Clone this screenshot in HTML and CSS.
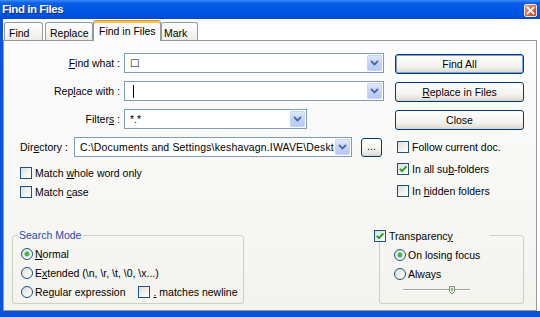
FILE: index.html
```html
<!DOCTYPE html>
<html lang="en">
<head>
<meta charset="utf-8">
<title>Find in Files</title>
<link rel="stylesheet" href="styles.css">
</head>
<body>
<div class="window">
  <div class="titlebar">
    <span class="title">Find in Files</span>
    <span class="close" aria-label="Close">
      <svg width="11" height="11" viewBox="0 0 11 11"><path d="M2.5 2.5 L8.5 8.5 M8.5 2.5 L2.5 8.5" stroke="#fff" stroke-width="1.8" stroke-linecap="square"/></svg>
    </span>
  </div>
  <div class="frame">
    <div class="tabs">
      <div class="tab t-find">Find</div>
      <div class="tab t-replace">Replace</div>
      <div class="tab active t-fif">Find in Files</div>
      <div class="tab t-mark">Mark</div>
    </div>
    <div class="panel">
      <div class="top">
        <div class="fields">
          <div class="row">
            <label class="lbl"><u>F</u>ind what :</label>
            <div class="combo w-wide">
              <span class="value"><span class="unknown">□</span></span>
              <span class="arrow"><svg width="9" height="6" viewBox="0 0 9 6"><path d="M1 1 L4.5 4.5 L8 1" fill="none" stroke="#4D6A9A" stroke-width="1.8"/></svg></span>
            </div>
          </div>
          <div class="row">
            <label class="lbl">Rep<u>l</u>ace with :</label>
            <div class="combo w-wide">
              <span class="value"><span class="caret"></span></span>
              <span class="arrow"><svg width="9" height="6" viewBox="0 0 9 6"><path d="M1 1 L4.5 4.5 L8 1" fill="none" stroke="#4D6A9A" stroke-width="1.8"/></svg></span>
            </div>
          </div>
          <div class="row">
            <label class="lbl">Filter<u>s</u> :</label>
            <div class="combo w-filter">
              <span class="value">*.*</span>
              <span class="arrow"><svg width="9" height="6" viewBox="0 0 9 6"><path d="M1 1 L4.5 4.5 L8 1" fill="none" stroke="#4D6A9A" stroke-width="1.8"/></svg></span>
            </div>
          </div>
          <div class="row dir-row">
            <label class="dir-lbl">Dir<u>e</u>ctory :</label>
            <div class="combo w-dir">
              <span class="value dir-value">C:\Documents and Settings\keshavagn.IWAVE\Desktop</span>
              <span class="arrow"><svg width="9" height="6" viewBox="0 0 9 6"><path d="M1 1 L4.5 4.5 L8 1" fill="none" stroke="#4D6A9A" stroke-width="1.8"/></svg></span>
            </div>
            <button class="btn dots">...</button>
          </div>
          <div class="check-row left"><span class="cb"></span><span class="txt">Match <u>w</u>hole word only</span></div>
          <div class="check-row left"><span class="cb"></span><span class="txt">Match <u>c</u>ase</span></div>
        </div>
        <div class="actions">
          <button class="btn default"><span class="txt">Find All</span></button>
          <button class="btn"><span class="txt"><u>R</u>eplace in Files</span></button>
          <button class="btn last"><span class="txt">Close</span></button>
          <div class="check-row right"><span class="cb"></span><span class="txt">Follow current doc.</span></div>
          <div class="check-row right"><span class="cb checked"><svg width="10" height="10" viewBox="0 0 10 10"><path d="M1.8 4.8 L4 7.2 L8.4 2.4" fill="none" stroke="#21A121" stroke-width="1.9"/></svg></span><span class="txt">In all su<u>b</u>-folders</span></div>
          <div class="check-row right"><span class="cb"></span><span class="txt">In <u>h</u>idden folders</span></div>
        </div>
      </div>
      <div class="bottom">
        <fieldset class="group search">
          <legend>Search Mode</legend>
          <div class="gbody">
            <div class="opt"><span class="radio on"></span><span class="txt"><u>N</u>ormal</span></div>
            <div class="opt"><span class="radio"></span><span class="txt">E<u>x</u>tended (\n, \r, \t, \0, \x...)</span></div>
            <div class="opt"><span class="radio"></span><span class="txt">Re<u>g</u>ular expression</span><span class="cb gap"></span><span class="txt"><u>.</u> matches newline</span></div>
          </div>
        </fieldset>
        <fieldset class="group transp">
          <legend><span class="cb checked"><svg width="10" height="10" viewBox="0 0 10 10"><path d="M1.8 4.8 L4 7.2 L8.4 2.4" fill="none" stroke="#21A121" stroke-width="1.9"/></svg></span><span class="txt">Transparenc<u>y</u></span></legend>
          <div class="gbody tbody">
            <div class="opt"><span class="radio on"></span><span class="txt">On losing focus</span></div>
            <div class="opt"><span class="radio"></span><span class="txt">Always</span></div>
            <div class="slider">
              <svg width="70" height="11" viewBox="0 0 70 11">
                <rect x="0" y="5" width="67" height="1" fill="#A3A39B"/>
                <rect x="0" y="6" width="67" height="1" fill="#FFFFFF"/>
                <path d="M46.5 2.5 H51.5 V7.5 L49 10 L46.5 7.5 Z" fill="#E9ECE4" stroke="#7E8F7A" stroke-width="1"/>
                <rect x="48" y="4" width="2" height="3" fill="#8CC07A"/>
              </svg>
            </div>
          </div>
        </fieldset>
      </div>
    </div>
  </div>
</div>
</body>
</html>
```

FILE: styles.css
```css
html, body {
  margin: 0;
  padding: 0;
  background: #ffffff;
}

body {
  font-family: "Liberation Sans", Arial, sans-serif;
  font-size: 10.5px;
  color: #000;
}

.window {
  width: 540px;
  height: 317px;
  display: flex;
  flex-direction: column;
  overflow: hidden;
}

.txt { white-space: pre; }

/* Title bar */
.titlebar {
  height: 19px;
  flex: none;
  display: flex;
  align-items: flex-start;
  padding: 0 3px 0 2px;
  box-sizing: border-box;
  background: linear-gradient(to bottom, #3C8BF3 0, #0A5FE6 3px, #0058E8 45%, #0053DF 80%, #0047CF 100%);
}

.title {
  color: #fff;
  font-weight: bold;
  font-size: 11.5px;
  letter-spacing: -0.45px;
  line-height: 18px;
  text-shadow: 1px 1px 0 #0F2A8C;
}

.close {
  margin-left: auto;
  margin-top: 4px;
  width: 13px;
  height: 13px;
  box-sizing: border-box;
  border: 1px solid #F4E4DC;
  border-radius: 2px;
  background: linear-gradient(135deg, #F0A488 0%, #DC6A45 45%, #C54A21 100%);
  display: flex;
  align-items: center;
  justify-content: center;
}

.close svg { display: block; }

/* Frame around the client area */
.frame {
  flex: 1;
  display: flex;
  flex-direction: column;
  border-left: 3px solid #0A55DA;
  border-bottom: 6px solid #0B52D6;
  padding-right: 3px;
  background: #fff;
  min-height: 0;
}

/* Tabs */
.tabs {
  height: 22px;
  flex: none;
  display: flex;
  align-items: flex-end;
  padding-left: 1px;
  margin-bottom: -1px;
  z-index: 1;
}

.tab {
  box-sizing: border-box;
  height: 18px;
  margin-bottom: 1px;
  border: 1px solid #919B9C;
  border-bottom: none;
  border-radius: 3px 3px 0 0;
  background: linear-gradient(to bottom, #FFFFFF 0%, #F7F7F4 50%, #ECEBE6 100%);
  display: flex;
  align-items: center;
  padding: 2px 0 0 4px;
  white-space: nowrap;
}

.t-find { width: 39px; }
.t-replace { width: 48px; margin-left: 2px; }
.t-mark { width: 37px; padding-left: 2px; }

.tab.active {
  width: 68px;
  height: 21px;
  margin-bottom: 0;
  padding: 0 0 1px 5px;
  background: #FCFCFE;
  border-top: 1px solid #E68B2C;
  box-shadow: inset 0 2px 0 #FFC73C;
}

/* Panel */
.panel {
  flex: 1;
  box-sizing: border-box;
  border: 1px solid #919B9C;
  background: linear-gradient(to bottom, #FCFCFE 0%, #F8F8F6 50%, #F4F3EE 100%);
  padding-top: 12px;
  display: flex;
  flex-direction: column;
}

.top {
  display: flex;
  height: 149px;
  flex: none;
}

.fields {
  width: 387px;
  flex: none;
}

.row {
  display: flex;
  align-items: center;
  height: 20px;
  margin-bottom: 8px;
}

.dir-row { margin-bottom: 6px; }

.lbl {
  width: 116px;
  margin-right: 4px;
  text-align: right;
  white-space: nowrap;
}

.dir-lbl {
  width: 70px;
  box-sizing: border-box;
  padding-left: 16px;
  white-space: nowrap;
}

.combo {
  box-sizing: border-box;
  height: 20px;
  border: 1px solid #7F9DB9;
  background: #fff;
  display: flex;
  align-items: center;
}

.w-wide { width: 260px; }
.w-filter { width: 183px; }
.w-dir { width: 278px; }

.value {
  flex: 1;
  min-width: 0;
  padding-left: 5px;
  overflow: hidden;
  white-space: nowrap;
  display: flex;
  align-items: center;
}

.dir-value {
  display: block;
  letter-spacing: 0.15px;
}

.unknown {
  font-family: "DejaVu Sans", sans-serif;
  font-weight: bold;
  font-size: 10px;
  line-height: 12px;
}

.caret {
  display: inline-block;
  width: 1px;
  height: 13px;
  margin-left: 3px;
  background: #000;
}

.arrow {
  flex: none;
  width: 15px;
  align-self: stretch;
  margin: 1px;
  box-sizing: border-box;
  border: 1px solid #C6D6FA;
  border-radius: 1px;
  background: linear-gradient(to bottom, #DFE8FC 0%, #C4D5F8 50%, #B6CAF4 100%);
  display: flex;
  align-items: center;
  justify-content: center;
}

.arrow svg { display: block; }

/* Buttons */
.btn {
  box-sizing: border-box;
  display: flex;
  align-items: center;
  justify-content: center;
  width: 100%;
  height: 20px;
  margin: 0 0 8px 0;
  padding: 0;
  border: 1px solid #003C74;
  border-radius: 3px;
  background: linear-gradient(to bottom, #FFFFFF 0%, #F5F4F0 60%, #E4E1D8 90%, #D6D0C5 100%);
  font: inherit;
  color: #000;
}

.btn.default {
  box-shadow: inset 0 0 0 1px #7E9EE2;
}

.btn.last { margin-bottom: 6px; }

.btn.dots {
  width: 21px;
  height: 19px;
  margin: 0 0 0 9px;
  padding-bottom: 2px;
}

.actions {
  width: 129px;
  margin-left: auto;
  margin-right: 12px;
  padding-top: 1px;
}

/* Checkboxes and radios */
.check-row {
  display: flex;
  align-items: center;
  white-space: nowrap;
}

.check-row.left {
  height: 19px;
  padding-left: 16px;
}

.check-row.right {
  height: 22px;
  padding-left: 2px;
}

.cb {
  flex: none;
  box-sizing: border-box;
  width: 12px;
  height: 12px;
  margin-right: 3px;
  border: 1px solid #1C5180;
  background: linear-gradient(135deg, #DCDCD7 0%, #F4F4F1 60%, #FFFFFF 100%);
  display: inline-flex;
  align-items: center;
  justify-content: center;
}

.cb svg { display: block; }

.cb.gap { margin-left: 13px; }

.radio {
  flex: none;
  box-sizing: border-box;
  width: 12px;
  height: 12px;
  margin-right: 2px;
  border: 1px solid #1C5180;
  border-radius: 50%;
  background: linear-gradient(135deg, #DCDCD7 0%, #F4F4F1 60%, #FFFFFF 100%);
}

.radio.on {
  background:
    radial-gradient(circle at center, #3DAA3D 0, #4DB84D 2px, rgba(77,184,77,0) 3px),
    linear-gradient(135deg, #DCDCD7 0%, #F4F4F1 60%, #FFFFFF 100%);
}

/* Group boxes */
.bottom {
  display: flex;
  align-items: flex-start;
  margin-top: 27px;
}

.group {
  box-sizing: border-box;
  margin: 0;
  padding: 0;
  min-width: 0;
  height: 75px;
  border: 1px solid #D0D0BF;
  border-radius: 3px;
}

.group legend {
  padding: 0 2px;
  margin-left: 4px;
  line-height: 12px;
  white-space: nowrap;
}

.search {
  width: 232px;
  margin-left: 8px;
}

.search legend { color: #1D4BB0; }

.transp {
  width: 145px;
  margin-left: auto;
  margin-right: 12px;
}

.transp legend {
  margin-left: -6px;
  padding: 0;
  width: 116px;
  height: 13px;
  display: flex;
  align-items: center;
}

.transp legend .cb { margin-right: 3px; }

.gbody {
  padding: 4px 0 0 8px;
  display: grid;
  grid-auto-rows: 18px;
  row-gap: 1px;
}

.tbody {
  padding-left: 14px;
}

.opt {
  display: flex;
  align-items: center;
  white-space: nowrap;
}

.slider {
  height: 11px;
  padding-left: 9px;
}

.slider svg { display: block; }
```
